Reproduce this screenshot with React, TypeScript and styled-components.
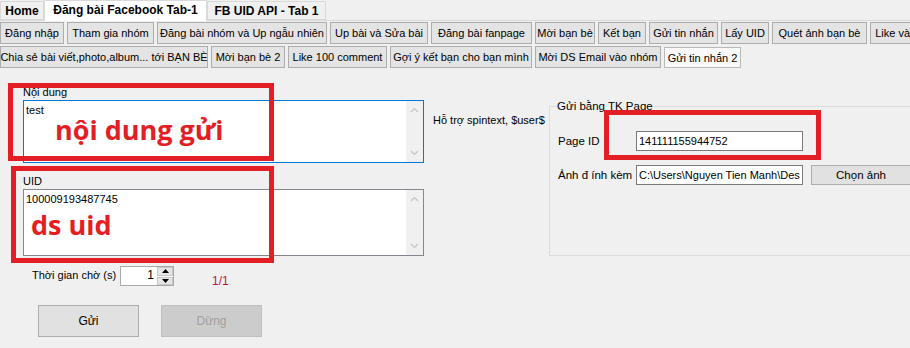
import React from "react";
import styled, { createGlobalStyle } from "styled-components";

const GlobalStyle = createGlobalStyle`
    html, body {
        margin: 0;
        padding: 0;
        background: #f0f0f0;
    }
    body {
        font-family: "Liberation Sans", Arial, sans-serif;
        font-size: 11px;
        color: #000;
        overflow: hidden;
    }
`;

const topTabs = [
    { label: "Home", active: false, width: 44 },
    { label: "Đăng bài Facebook Tab-1", active: true, width: 163 },
    { label: "FB UID API - Tab 1", active: false, width: 119 },
];

const rowOne = [
    { label: "Đăng nhập", width: 64 },
    { label: "Tham gia nhóm", width: 87 },
    { label: "Đăng bài nhóm và Up ngẫu nhiên", width: 170 },
    { label: "Up bài và Sửa bài", width: 98 },
    { label: "Đăng bài fanpage", width: 101 },
    { label: "Mời bạn bè", width: 60 },
    { label: "Kết bạn", width: 48 },
    { label: "Gửi tin nhắn", width: 69 },
    { label: "Lấy UID", width: 48 },
    { label: "Quét ảnh bạn bè", width: 95 },
    { label: "Like và Comment", width: 96 },
];

const rowTwo = [
    { label: "Chia sẻ bài viết,photo,album... tới BẠN BÈ", width: 208 },
    { label: "Mời bạn bè 2", width: 74 },
    { label: "Like 100 comment", width: 99 },
    { label: "Gợi ý kết bạn cho bạn mình", width: 142 },
    { label: "Mời DS Email vào nhóm", width: 126 },
    { label: "Gửi tin nhắn 2", width: 77, active: true },
];

const ChevronUp = () => (
    <svg width="9" height="6" viewBox="0 0 9 6">
        <path d="M1 5 L4.5 1.5 L8 5" fill="none" stroke="#c4c4c4" strokeWidth="1.2" />
    </svg>
);

const ChevronDown = () => (
    <svg width="9" height="6" viewBox="0 0 9 6">
        <path d="M1 1 L4.5 4.5 L8 1" fill="none" stroke="#c4c4c4" strokeWidth="1.2" />
    </svg>
);

const App: React.FC = () => {
    return (
        <>
            <GlobalStyle />
            <Page>
                <TabStrip>
                    {topTabs.map((t) => (
                        <TopTab key={t.label} $active={t.active} $width={t.width}>
                            {t.label}
                        </TopTab>
                    ))}
                </TabStrip>

                <SubTabs>
                    <SubRow>
                        {rowOne.map((b) => (
                            <SubTab key={b.label} $width={b.width}>
                                {b.label}
                            </SubTab>
                        ))}
                    </SubRow>
                    <SubRow>
                        {rowTwo.map((b) => (
                            <SubTab key={b.label} $width={b.width} $active={b.active}>
                                {b.label}
                            </SubTab>
                        ))}
                    </SubRow>
                </SubTabs>

                <Content>
                    <LeftCol>
                        <FieldLabel>Nội dung</FieldLabel>
                        <TextBox $height={63} $focused>
                            <TextArea>test</TextArea>
                            <ScrollBar>
                                <ChevronUp />
                                <ChevronDown />
                            </ScrollBar>
                        </TextBox>

                        <FieldLabel $top={11}>UID</FieldLabel>
                        <TextBox $height={67}>
                            <TextArea>100009193487745</TextArea>
                            <ScrollBar>
                                <ChevronUp />
                                <ChevronDown />
                            </ScrollBar>
                        </TextBox>

                        <TimerRow>
                            <TimerLabel>Thời gian chờ (s)</TimerLabel>
                            <NumericBox>
                                <NumericValue>1</NumericValue>
                                <Spinner>
                                    <SpinButton>
                                        <svg width="7" height="4" viewBox="0 0 7 4">
                                            <path d="M0 4 L3.5 0 L7 4 Z" fill="#000" />
                                        </svg>
                                    </SpinButton>
                                    <SpinButton>
                                        <svg width="7" height="4" viewBox="0 0 7 4">
                                            <path d="M0 0 L3.5 4 L7 0 Z" fill="#000" />
                                        </svg>
                                    </SpinButton>
                                </Spinner>
                            </NumericBox>
                            <Progress>1/1</Progress>
                        </TimerRow>

                        <ActionRow>
                            <ActionButton>Gửi</ActionButton>
                            <ActionButton disabled>Dừng</ActionButton>
                        </ActionRow>
                    </LeftCol>

                    <HintCol>Hỗ trợ spintext, $user$</HintCol>

                    <GroupBox>
                        <Legend>Gửi bằng TK Page</Legend>
                        <FormRow $top={18}>
                            <RowLabel>Page ID</RowLabel>
                            <Input>141111155944752</Input>
                        </FormRow>
                        <FormRow $top={14}>
                            <RowLabel>Ảnh đ ính kèm</RowLabel>
                            <Input>C:\Users\Nguyen Tien Manh\Des</Input>
                            <PickButton>Chọn ảnh</PickButton>
                        </FormRow>
                    </GroupBox>
                </Content>

                <RedFrame $left={8} $top={83} $width={266} $height={78} />
                <RedFrame $left={11} $top={166} $width={263} $height={97} />
                <RedFrame $left={604} $top={110} $width={217} $height={50} />
                <Annotation $left={55} $top={113}>nội dung gửi</Annotation>
                <Annotation $left={31} $top={208}>ds uid</Annotation>
            </Page>
        </>
    );
};

export default App;

const Page = styled.div`
    position: relative;
    width: 910px;
    height: 348px;
    overflow: hidden;
    background: #f0f0f0;
`;

const TabStrip = styled.div`
    display: flex;
    align-items: flex-end;
    height: 21px;
    box-sizing: border-box;
    border-bottom: 1px solid #d9d9d9;
`;

const TopTab = styled.div<{ $active?: boolean; $width: number }>`
    box-sizing: border-box;
    flex: none;
    width: ${({ $width }) => $width}px;
    height: ${({ $active }) => ($active ? 21 : 19)}px;
    margin-bottom: ${({ $active }) => ($active ? -1 : 0)}px;
    display: flex;
    align-items: ${({ $active }) => ($active ? "flex-start" : "center")};
    justify-content: center;
    padding-top: ${({ $active }) => ($active ? 2 : 1)}px;
    background: ${({ $active }) => ($active ? "#ffffff" : "#f0f0f0")};
    border: 1px solid #d9d9d9;
    border-bottom: ${({ $active }) => ($active ? "none" : "1px solid #d9d9d9")};
    font-weight: bold;
    font-size: 12px;
    white-space: nowrap;
`;

const SubTabs = styled.div`
    display: flex;
    flex-direction: column;
    gap: 2px;
    padding-top: 1px;
`;

const SubRow = styled.div`
    display: flex;
    gap: 3px;
    height: 22px;
`;

const SubTab = styled.div<{ $width: number; $active?: boolean }>`
    box-sizing: border-box;
    flex: none;
    width: ${({ $width }) => $width}px;
    height: ${({ $active }) => ($active ? 21 : 22)}px;
    margin-top: ${({ $active }) => ($active ? 1 : 0)}px;
    display: flex;
    align-items: center;
    justify-content: center;
    background: ${({ $active }) => ($active ? "#f9f9f9" : "#e4e4e4")};
    border: 1px solid ${({ $active }) => ($active ? "#b9b9b9" : "#adadad")};
    white-space: nowrap;
    overflow: hidden;
`;

const Content = styled.div`
    display: flex;
    align-items: flex-start;
`;

const LeftCol = styled.div`
    flex: none;
    width: 401px;
    margin-left: 23px;
    padding-top: 17px;
    display: flex;
    flex-direction: column;
`;

const FieldLabel = styled.div<{ $top?: number }>`
    line-height: 15px;
    height: 15px;
    margin-top: ${({ $top }) => $top ?? 0}px;
`;

const TextBox = styled.div<{ $height: number; $focused?: boolean }>`
    box-sizing: border-box;
    height: ${({ $height }) => $height}px;
    display: flex;
    background: #fff;
    border: 1px solid ${({ $focused }) => ($focused ? "#0078d7" : "#828790")};
`;

const TextArea = styled.div`
    flex: 1;
    padding: 3px 2px;
    line-height: 13px;
`;

const ScrollBar = styled.div`
    width: 17px;
    background: #f0f0f0;
    display: flex;
    flex-direction: column;
    justify-content: space-between;
    align-items: center;
    padding: 6px 0;
`;

const TimerRow = styled.div`
    display: flex;
    align-items: flex-start;
    height: 19px;
    margin-top: 10px;
`;

const TimerLabel = styled.div`
    flex: none;
    margin-left: 9px;
    width: 88px;
    line-height: 19px;
    white-space: nowrap;
`;

const NumericBox = styled.div`
    box-sizing: border-box;
    flex: none;
    width: 54px;
    height: 20px;
    display: flex;
    background: #fff;
    border: 1px solid #a9a9a9;
`;

const NumericValue = styled.div`
    flex: 1;
    text-align: right;
    padding-right: 3px;
    line-height: 17px;
    font-size: 12px;
`;

const Spinner = styled.div`
    width: 16px;
    display: flex;
    flex-direction: column;
    gap: 1px;
`;

const SpinButton = styled.div`
    flex: 1;
    display: flex;
    align-items: center;
    justify-content: center;
    background: #e6e6e6;
    border: 1px solid #c8c8c8;
`;

const Progress = styled.div`
    margin-left: 38px;
    margin-top: 8px;
    color: #c0143c;
    line-height: 15px;
    font-size: 12px;
`;

const ActionRow = styled.div`
    display: flex;
    gap: 22px;
    margin-top: 20px;
    margin-left: 15px;
`;

const ActionButton = styled.button<{ disabled?: boolean }>`
    box-sizing: border-box;
    width: 101px;
    height: 32px;
    font-family: "Liberation Sans", Arial, sans-serif;
    font-size: 12px;
    color: ${({ disabled }) => (disabled ? "#a0a0a0" : "#000")};
    background: ${({ disabled }) => (disabled ? "#cccccc" : "#e1e1e1")};
    border: 1px solid ${({ disabled }) => (disabled ? "#bfbfbf" : "#adadad")};
    border-radius: 0;
    padding: 0;
`;

const HintCol = styled.div`
    flex: none;
    width: 116px;
    margin-left: 9px;
    padding-top: 45px;
    line-height: 15px;
    white-space: nowrap;
`;

const GroupBox = styled.fieldset`
    box-sizing: border-box;
    flex: none;
    width: 400px;
    height: 157px;
    margin: 31px 0 0 0;
    padding: 0 0 0 8px;
    border: 1px solid #dcdcdc;
    min-width: 0;
`;

const Legend = styled.legend`
    padding: 0;
    margin-left: -1px;
    line-height: 14px;
    font-size: 11.5px;
`;

const FormRow = styled.div<{ $top: number }>`
    display: flex;
    align-items: center;
    margin-top: ${({ $top }) => $top}px;
`;

const RowLabel = styled.div`
    flex: none;
    width: 78px;
    white-space: nowrap;
    font-size: 11.5px;
`;

const Input = styled.div`
    box-sizing: border-box;
    flex: none;
    width: 167px;
    height: 20px;
    padding: 0 2px;
    line-height: 18px;
    background: #fff;
    border: 1px solid #7a7a7a;
    white-space: nowrap;
    overflow: hidden;
    font-size: 11px;
`;

const PickButton = styled.div`
    box-sizing: border-box;
    flex: none;
    width: 100px;
    height: 20px;
    margin-left: 8px;
    display: flex;
    align-items: center;
    justify-content: center;
    background: #e1e1e1;
    border: 1px solid #adadad;
    font-size: 11.5px;
`;

const RedFrame = styled.div<{ $left: number; $top: number; $width: number; $height: number }>`
    position: absolute;
    box-sizing: border-box;
    left: ${({ $left }) => $left}px;
    top: ${({ $top }) => $top}px;
    width: ${({ $width }) => $width}px;
    height: ${({ $height }) => $height}px;
    border: 5px solid #e31e24;
    pointer-events: none;
`;

const Annotation = styled.div<{ $left: number; $top: number }>`
    position: absolute;
    left: ${({ $left }) => $left}px;
    top: ${({ $top }) => $top}px;
    font-family: "Open Sans", "Noto Sans", sans-serif;
    font-weight: bold;
    font-size: 27px;
    line-height: 34px;
    color: #e31e24;
    white-space: nowrap;
`;
